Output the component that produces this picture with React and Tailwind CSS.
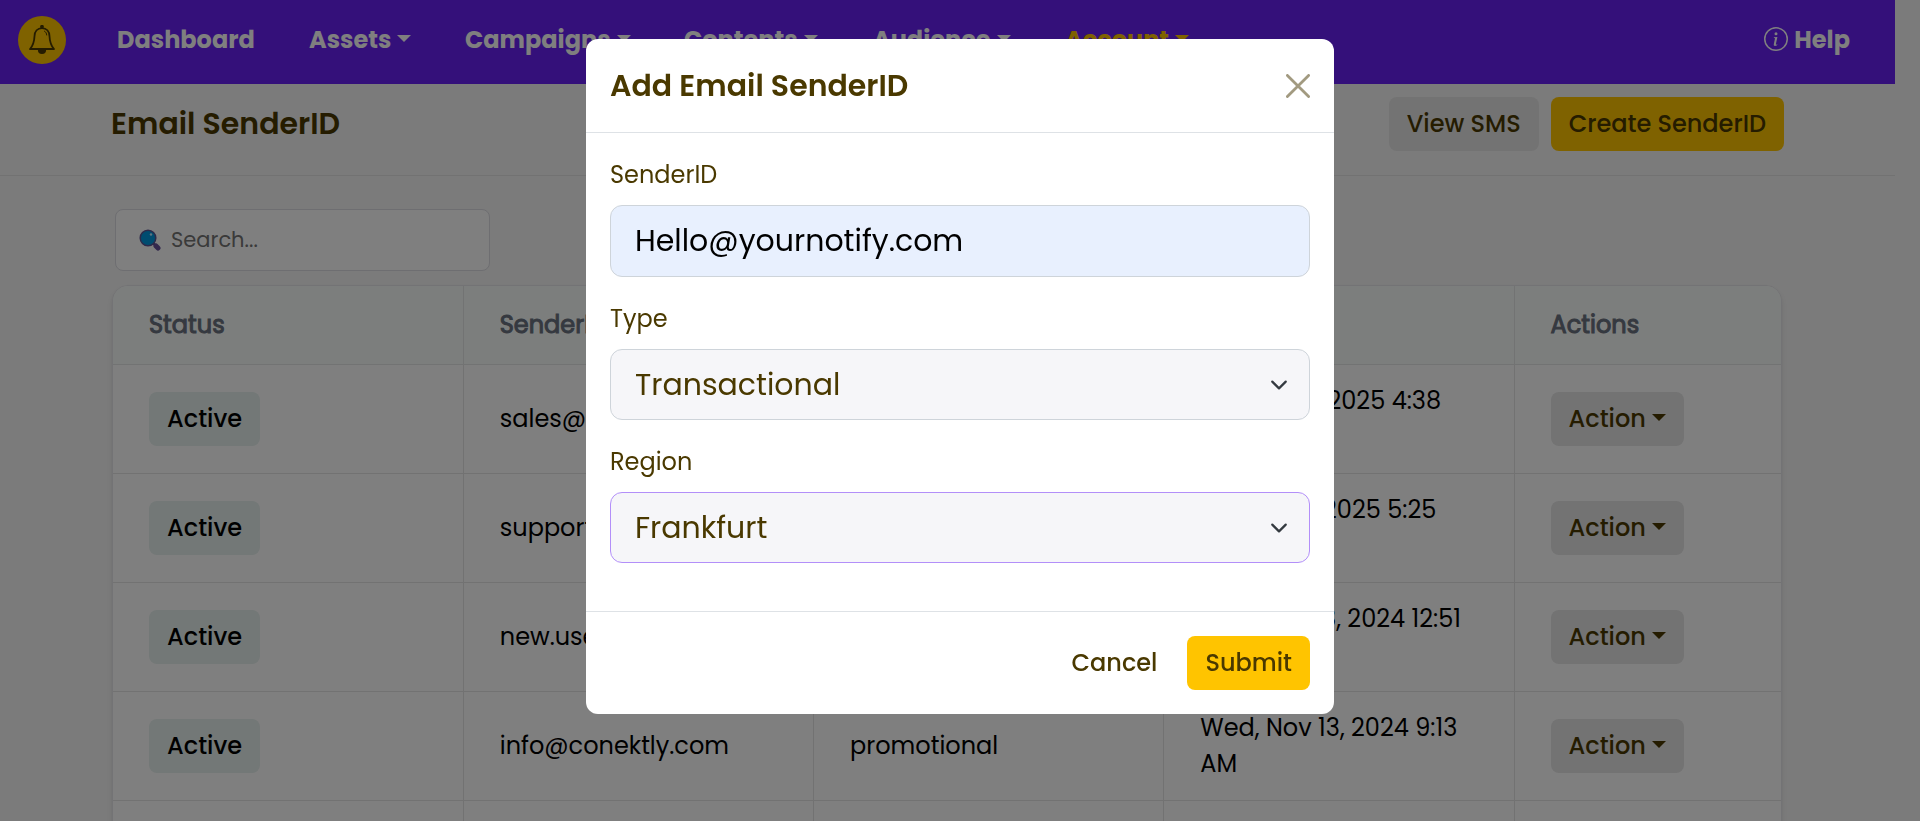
import React from "react";

const NAV = [
  { label: "Dashboard", width: "w-[192px]" },
  { label: "Assets", width: "w-[156px]", menu: true },
  { label: "Campaigns", width: "w-[219px]", menu: true },
  { label: "Contents", width: "w-[189px]", menu: true },
  { label: "Audience", width: "w-[192px]", menu: true },
  { label: "Account", width: "w-[192px]", menu: true, active: true },
];

const ROWS = [
  { sender: "sales@conektly.com", type: "promotional", date: "Mon, Jul 7, 2025 4:38", period: "PM" },
  { sender: "support@conektly.com", type: "transactional", date: "Sun, Jul 6, 2025 5:25", period: "PM" },
  { sender: "new.user@conektly.com", type: "transactional", date: "Thu, Nov 28, 2024 12:51", period: "PM" },
  { sender: "info@conektly.com", type: "promotional", date: "Wed, Nov 13, 2024 9:13", period: "AM" },
  { sender: "hello@conektly.com", type: "promotional", date: "Wed, Nov 13, 2024 9:02", period: "AM" },
];

function Caret() {
  return (
    <svg viewBox="0 0 14 7" className="mb-[3px] h-[7px] w-[14px] shrink-0" fill="currentColor" aria-hidden="true">
      <path d="M0 0h14L7 7z" />
    </svg>
  );
}

function Bell() {
  return (
    <svg viewBox="0 0 28 30" className="h-[30px] w-7" fill="none" stroke="currentColor" strokeWidth="1.8" strokeLinecap="round" strokeLinejoin="round" aria-hidden="true">
      <path d="M14 3.200c-4.600 0-7.300 3.400-7.500 8-.2 5-.6 8.300-4.500 12.800h24c-3.900-4.500-4.300-7.800-4.500-12.800-.2-4.600-2.900-8-7.500-8z" />
      <path d="M10.800 25a3.200 3.200 0 0 0 6.400 0z" fill="currentColor" />
      <circle cx="14" cy="1.800" r="1" fill="currentColor" />
      <path d="M16.500 6.200c1.500.8 2.100 2.200 2.200 3.800" strokeWidth="1" />
    </svg>
  );
}

function Magnifier() {
  return (
    <svg viewBox="0 0 22 22" className="h-[22px] w-[22px] shrink-0" aria-hidden="true">
      <path d="M13.500 13.500l3 3" stroke="#66509a" strokeWidth="2.500" strokeLinecap="round" />
      <path d="M17 17l2 2" stroke="#66509a" strokeWidth="5" strokeLinecap="round" />
      <circle cx="9" cy="9" r="7.800" fill="#0099e0" stroke="#5a5595" strokeWidth="1.500" />
      <circle cx="12" cy="5.500" r="1.200" fill="#bfe9ff" />
    </svg>
  );
}

function SelectField({ id, label, value, options, border }) {
  return (
    <div className="mb-6">
      <label htmlFor={id} className="mb-3 block leading-9">{label}</label>
      <div className="relative">
        <select id={id} defaultValue={value} className={`block h-[71px] w-full appearance-none rounded-xl border bg-[#f6f6f9] px-6 text-[30px] text-[#4a3900] outline-none ${border}`}>
          {options.map((o) => <option key={o}>{o}</option>)}
        </select>
        <svg viewBox="0 0 16 16" className="pointer-events-none absolute top-[27px] right-[22px] size-[18px]" fill="none" stroke="#343a40" strokeWidth="2" strokeLinecap="round" strokeLinejoin="round" aria-hidden="true">
          <path d="m2 5 6 6 6-6" />
        </svg>
      </div>
    </div>
  );
}

export default function App() {
  return (
    <div className="h-screen overflow-hidden bg-[#f6f6f6] pr-[25px] font-['Poppins','Inter',sans-serif] text-2xl leading-9 text-[#4a3900]">
      <nav className="flex h-[84px] items-center bg-[#6820f4] pr-[45px] pb-1 pl-[18px] font-bold text-white">
        <button type="button" aria-label="Notifications" className="mr-[51px] flex size-12 items-center justify-center rounded-full bg-[#ffc400] text-[#4a3900]">
          <Bell />
        </button>
        <ul className="flex flex-1">
          {NAV.map((n) => (
            <li key={n.label} className={n.width}>
              <a href="#" className={`flex items-center gap-1.5 ${n.active ? "text-[#ffc400]" : ""}`}>
                {n.label}
                {n.menu && <Caret />}
              </a>
            </li>
          ))}
        </ul>
        <a href="#" className="flex items-center gap-1.5">
          <svg viewBox="0 0 16 16" className="mb-0.5 size-6" fill="currentColor" aria-hidden="true">
            <path d="M8 15A7 7 0 1 1 8 1a7 7 0 0 1 0 14m0 1A8 8 0 1 0 8 0a8 8 0 0 0 0 16" />
            <path d="m8.930 6.588-2.290.287-.082.380.450.083c.294.070.352.176.288.469l-.738 3.468c-.194.897.105 1.319.808 1.319.545 0 1.178-.252 1.465-.598l.088-.416c-.2.176-.492.246-.686.246-.275 0-.375-.193-.304-.533zM9 4.500a1 1 0 1 1-2 0 1 1 0 0 1 2 0" />
          </svg>
          Help
        </a>
      </nav>

      <header className="flex items-center justify-between border-b border-[#e4e4e4] px-[111px] pt-[13px] pb-6">
        <h1 className="pb-0.5 text-[30px] leading-[45px] font-semibold">Email SenderID</h1>
        <div className="flex gap-3 font-medium">
          <button type="button" className="h-[54px] rounded-lg bg-[#e6e6e6] px-[18px]">View SMS</button>
          <button type="button" className="h-[54px] rounded-lg bg-[#ffc400] px-[18px]">Create SenderID</button>
        </div>
      </header>

      <main className="pt-[33px] pr-[113px] pl-[112px]">
        <div className="mb-[14px] ml-[3px] flex h-[62px] w-[375px] items-center gap-2.5 rounded-lg border border-[#dcdce2] bg-white pl-[23px]">
          <Magnifier />
          <input type="search" aria-label="Search" placeholder="Search..." className="w-full min-w-0 bg-transparent text-[21px] outline-none placeholder:text-[#757575]" />
        </div>
        <div className="overflow-hidden rounded-t-2xl border border-[#e6e6ea] bg-white shadow-md">
          <table className="w-full table-fixed border-collapse text-left">
            <colgroup>
              <col className="w-[21%]" />
              <col className="w-[21%]" />
              <col className="w-[21%]" />
              <col className="w-[21%]" />
              <col className="w-[16%]" />
            </colgroup>
            <thead className="bg-[#f9fdfb] text-[#6b7280]">
              <tr className="h-[78px]">
                {["Status", "SenderID", "Type", "Created", "Actions"].map((h) => (
                  <th key={h} className="border-r border-b border-[#e4e6e6] px-9 font-normal [-webkit-text-stroke:1px] last:border-r-0">{h}</th>
                ))}
              </tr>
            </thead>
            <tbody className="text-black">
              {ROWS.map((r) => (
                <tr key={r.sender} className="*:border-r *:border-b *:border-[#e4e4e4] *:px-9 *:py-[18px] *:last:border-r-0">
                  <td><span className="inline-flex h-[54px] items-center rounded-lg bg-[#e6f0ee] px-[18px] align-middle font-medium">Active</span></td>
                  <td className="whitespace-nowrap">{r.sender}</td>
                  <td>{r.type}</td>
                  <td>{r.date}<br />{r.period}</td>
                  <td>
                    <button type="button" className="inline-flex h-[54px] items-center gap-1.5 rounded-lg bg-[#e6e6e6] px-[18px] align-middle font-medium text-[#4a3900]">
                      Action <Caret />
                    </button>
                  </td>
                </tr>
              ))}
            </tbody>
          </table>
        </div>
      </main>

      <div className="fixed inset-0 bg-black/50">
        <form role="dialog" aria-modal="true" aria-labelledby="dialog-title" onSubmit={(e) => e.preventDefault()} className="mx-auto mt-[39px] w-full max-w-[748px] rounded-xl bg-white">
          <div className="flex items-center justify-between border-b border-[#dee2e6] p-6">
            <h2 id="dialog-title" className="text-[30px] leading-[45px] font-semibold">Add Email SenderID</h2>
            <button type="button" aria-label="Close" className="text-[#a29a80]">
              <svg viewBox="0 0 24 24" className="size-6" fill="none" stroke="currentColor" strokeWidth="2.800" strokeLinecap="round" aria-hidden="true">
                <path d="M1.400 1.400l21.200 21.200M22.600 1.400l-21.200 21.200" />
              </svg>
            </button>
          </div>
          <div className="border-b border-[#dee2e6] p-6">
            <div className="mb-6">
              <label htmlFor="sender" className="mb-3 block leading-9">SenderID</label>
              <input id="sender" type="email" defaultValue="Hello@yournotify.com" className="block h-[72px] w-full rounded-xl border border-[#ced4da] bg-[#e8f0fe] px-6 text-[30px] text-black outline-none" />
            </div>
            <SelectField id="type" label="Type" value="Transactional" options={["Transactional", "Promotional"]} border="border-[#ced4da]" />
            <SelectField id="region" label="Region" value="Frankfurt" options={["Frankfurt", "Ireland"]} border="border-[#b38ff9]" />
          </div>
          <div className="flex justify-end gap-3 p-6 font-medium">
            <button type="button" className="h-[54px] px-[18px]">Cancel</button>
            <button type="submit" className="h-[54px] rounded-lg bg-[#ffc400] px-[18px]">Submit</button>
          </div>
        </form>
      </div>
    </div>
  );
}
